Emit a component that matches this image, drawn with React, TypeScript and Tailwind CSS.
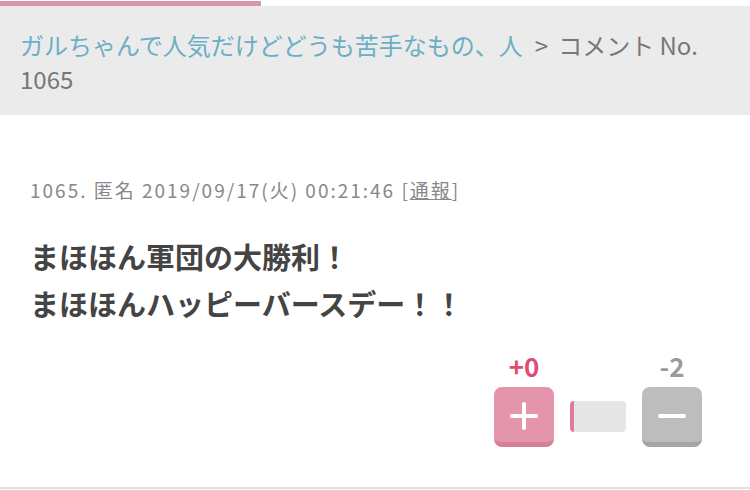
const jp = { fontFamily: '"Noto Sans CJK JP", "Noto Sans", sans-serif' };

function VoteButton({ kind }: { kind: "plus" | "minus" }) {
  const plus = kind === "plus";
  return (
    <div
      className={
        plus
          ? "w-[60px] h-[60px] rounded-[8px] bg-[#e595ab] border-b-[5px] border-[#d77f98] flex items-center justify-center"
          : "w-[60px] h-[60px] rounded-[8px] bg-[#bdbdbd] border-b-[5px] border-[#a6a6a6] flex items-center justify-center"
      }
    >
      <svg width="32" height="32" viewBox="0 0 32 32" className="mt-[2px]">
        {plus && <rect x="14" y="2" width="4" height="28" rx="2" fill="#fff" />}
        <rect x="2" y="14" width="28" height="4" rx="2" fill="#fff" />
      </svg>
    </div>
  );
}

export default function App() {
  return (
    <div className="w-[750px] h-[490px] bg-white overflow-hidden flex flex-col" style={jp}>
      <div className="h-[6px] flex flex-col">
        <div className="h-[5px] w-[261px] bg-[#d597ab] mt-[1px]" />
      </div>
      <div className="bg-[#ebebeb] pl-[20px] pr-[30px] pt-[22px] pb-[19px] text-[24px] leading-[34px] text-[#777]">
        <span className="text-[#6aafc4]">ガルちゃんで人気だけどどうも苦手なもの、人</span>
        <span className="ml-[12px] mr-[10px]">&gt;</span>
        <span>コメント No.</span> <span>1065</span>
      </div>
      <div className="flex-1 flex flex-col px-[30px] pt-[62px]">
        <p className="text-[19px] leading-[26px] tracking-[2px] text-[#888]">
          1065. 匿名 2019/09/17(火) 00:21:46 [<span className="underline">通報</span>]
        </p>
        <div className="mt-[30px] text-[29px] leading-[47px] font-bold text-[#444]">
          <p>まほほん軍団の大勝利！</p>
          <p>まほほんハッピーバースデー！！</p>
        </div>
        <div className="mt-[24px] self-end mr-[18px] flex items-end gap-[16px]">
          <div className="flex flex-col items-center">
            <span className="text-[26px] leading-[30px] font-bold text-[#e04d74]">+0</span>
            <div className="mt-[6px]">
              <VoteButton kind="plus" />
            </div>
          </div>
          <div className="mb-[15px] w-[56px] h-[31px] rounded-[4px] bg-[#e6e6e6] border-l-[4px] border-[#e07b9a]" />
          <div className="flex flex-col items-center">
            <span className="text-[26px] leading-[30px] font-bold text-[#9a9a9a]">-2</span>
            <div className="mt-[6px]">
              <VoteButton kind="minus" />
            </div>
          </div>
        </div>
      </div>
      <div className="h-[2px] bg-[#e2dfe2] mb-[1px]" />
    </div>
  );
}
